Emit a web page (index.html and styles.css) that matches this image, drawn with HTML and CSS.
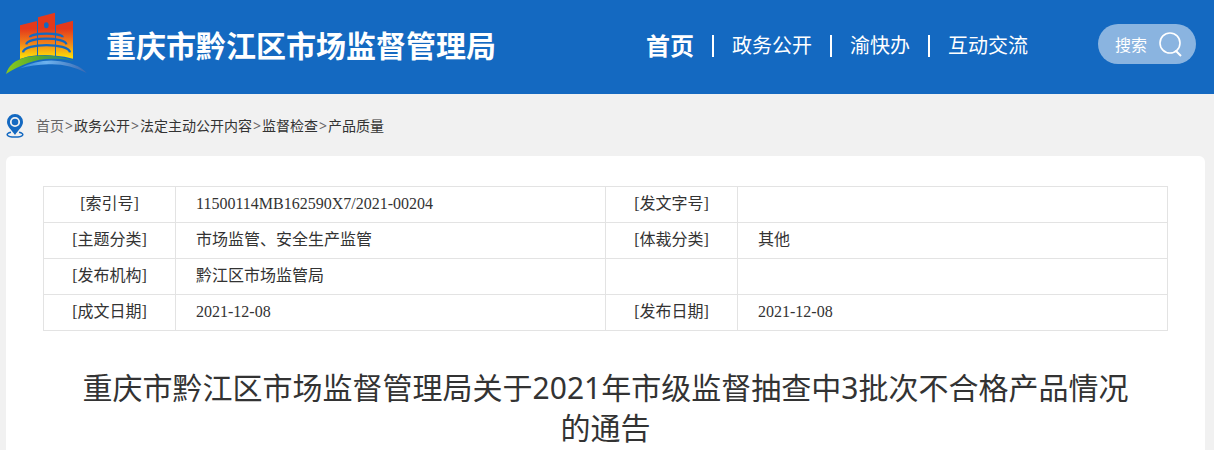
FILE: index.html
```html
<!DOCTYPE html>
<html lang="zh-CN">
<head>
    <meta charset="utf-8">
    <title>重庆市黔江区市场监督管理局</title>
    <link rel="stylesheet" href="styles.css">
</head>
<body>
    <header class="header">
        <svg class="logo" viewBox="18 39 252 204" aria-hidden="true">
            <defs>
                <linearGradient id="tower" x1="0" y1="0" x2="0" y2="1">
                    <stop offset="0.35" stop-color="#e4391b"/>
                    <stop offset="0.65" stop-color="#f0801a"/>
                    <stop offset="0.95" stop-color="#fdd808"/>
                </linearGradient>
                <linearGradient id="green" x1="0" y1="0" x2="1" y2="0">
                    <stop offset="0" stop-color="#8cc91c"/>
                    <stop offset="0.5" stop-color="#52a832"/>
                    <stop offset="1" stop-color="#1c7fa0"/>
                </linearGradient>
                <linearGradient id="river" x1="0" y1="0" x2="1" y2="0">
                    <stop offset="0" stop-color="#2f86d8"/>
                    <stop offset="0.4" stop-color="#6db2ee"/>
                    <stop offset="1" stop-color="#3a68b0"/>
                </linearGradient>
            </defs>
            <path fill="url(#tower)" d="M60 79L111 66V169Q82 171 60 180ZM114 55L165 41V170Q140 167 114 169ZM168 79L219 65V179Q194 172 168 170Z"/>
            <ellipse cx="139" cy="79" rx="7" ry="9" fill="#1469c1"/>
            <g fill="none" stroke="#1469c1" stroke-width="7">
                <path d="M90 115C90 100 188 100 188 115"/>
                <path d="M79 136C80 113 198 113 199 136"/>
                <path d="M69 160C72 131 207 131 210 160"/>
            </g>
            <path fill="url(#green)" d="M18 225Q28 188 78 175Q150 160 224 186Q140 170 84 192Q46 206 18 225Z"/>
            <path fill="url(#river)" d="M60 208Q110 182 165 185Q232 190 260 222Q205 193 145 196Q98 198 60 208Z"/>
        </svg>
        <h1 class="site-name">重庆市黔江区市场监督管理局</h1>
        <nav>
            <ul class="nav">
                <li><a class="active" href="#">首页</a></li>
                <li><a href="#">政务公开</a></li>
                <li><a href="#">渝快办</a></li>
                <li><a href="#">互动交流</a></li>
            </ul>
        </nav>
        <button class="search" type="button">
            搜索
            <svg width="24" height="26" viewBox="0 0 24 26" fill="none" stroke="#fff" aria-hidden="true">
                <circle cx="12" cy="12" r="10" stroke-width="1.6"/>
                <path d="M17.500 19.500L23 25" stroke-width="2"/>
            </svg>
        </button>
    </header>

    <main class="main">
        <div class="breadcrumb">
            <svg width="18" height="24" viewBox="0 0 18 24" aria-hidden="true">
                <path d="M5 18.200C-1 19.500 0 23 9 23S19 19.500 13 18.200" fill="none" stroke="#1469c1" stroke-width="1.500"/>
                <path d="M9 21C6 16.500 1 12.500 1 8A8 8 0 0 1 17 8C17 12.500 12 16.500 9 21Z" fill="#1469c1"/>
                <circle cx="9" cy="8" r="4.200" fill="#1469c1" stroke="#f1f1f1" stroke-width="1.800"/>
            </svg>
            <div class="path">
                <a class="home" href="#">首页</a><span>&gt;</span><a href="#">政务公开</a><span>&gt;</span><a href="#">法定主动公开内容</a><span>&gt;</span><a href="#">监督检查</a><span>&gt;</span><a href="#">产品质量</a>
            </div>
        </div>

        <article class="content">
            <table class="info">
                <tr>
                    <th scope="row">[索引号]</th>
                    <td>11500114MB162590X7/2021-00204</td>
                    <th scope="row">[发文字号]</th>
                    <td></td>
                </tr>
                <tr>
                    <th scope="row">[主题分类]</th>
                    <td>市场监管、安全生产监管</td>
                    <th scope="row">[体裁分类]</th>
                    <td>其他</td>
                </tr>
                <tr>
                    <th scope="row">[发布机构]</th>
                    <td>黔江区市场监管局</td>
                    <td></td>
                    <td></td>
                </tr>
                <tr>
                    <th scope="row">[成文日期]</th>
                    <td>2021-12-08</td>
                    <th scope="row">[发布日期]</th>
                    <td>2021-12-08</td>
                </tr>
            </table>
            <h2 class="title">重庆市黔江区市场监督管理局关于2021年市级监督抽查中3批次不合格产品情况的通告</h2>
        </article>
    </main>
</body>
</html>
```

FILE: styles.css
```css
* {
    box-sizing: border-box;
    margin: 0;
    padding: 0;
}

body {
    background: #f1f1f1;
    color: #333;
    font-family: "Noto Sans", "Noto Sans CJK SC", sans-serif;
    font-size: 14px;
}

a {
    color: inherit;
    text-decoration: none;
}

.header {
    display: flex;
    align-items: center;
    height: 94px;
    padding: 0 18px 2px 6px;
    background: #1469c1;
    color: #fff;
}

.logo {
    width: 84px;
    height: 68px;
}

.site-name {
    margin-left: 16px;
    font-size: 30px;
    line-height: 40px;
    white-space: nowrap;
}

nav {
    margin-left: auto;
}

.nav {
    display: flex;
    align-items: center;
    list-style: none;
    font-size: 20px;
    line-height: 40px;
    white-space: nowrap;
}

.nav li {
    display: flex;
    align-items: center;
}

.nav li + li::before {
    content: "";
    width: 2px;
    height: 22px;
    margin: 0 18px;
    background: #fff;
}

.nav .active {
    font-size: 24px;
    font-weight: bold;
}

/* 搜索按钮 */
.search {
    display: flex;
    align-items: center;
    justify-content: space-between;
    width: 98px;
    height: 40px;
    margin: 0 0 4px 70px;
    padding: 0 14px 0 17px;
    border: none;
    border-radius: 20px;
    background: rgba(255, 255, 255, 0.5);
    color: #fff;
    font-family: inherit;
    font-size: 16px;
    cursor: pointer;
}

.main {
    padding: 0 9px 0 6px;
}

.breadcrumb {
    display: flex;
    align-items: center;
    gap: 12px;
    height: 62px;
    padding-top: 2px;
}

.path {
    line-height: 20px;
}

.path span {
    margin: 0 1px;
    color: #666;
}

.path .home {
    color: #666;
}

.content {
    padding: 30px 37px;
    border-radius: 6px;
    background: #fff;
}

/* 信息表格 */
.info {
    width: 100%;
    table-layout: fixed;
    border-collapse: collapse;
    font-family: "Liberation Serif", "Noto Sans CJK SC", serif;
    font-size: 16px;
    line-height: 20px;
}

.info th,
.info td {
    height: 36px;
    padding: 0 20px 2px;
    border: 1px solid #e3e3e3;
}

.info th {
    width: 132px;
    padding: 0 0 2px;
    font-weight: normal;
}

.title {
    margin-top: 37px;
    padding: 0 30px;
    font-size: 30px;
    font-weight: normal;
    line-height: 40px;
    text-align: center;
}
```
